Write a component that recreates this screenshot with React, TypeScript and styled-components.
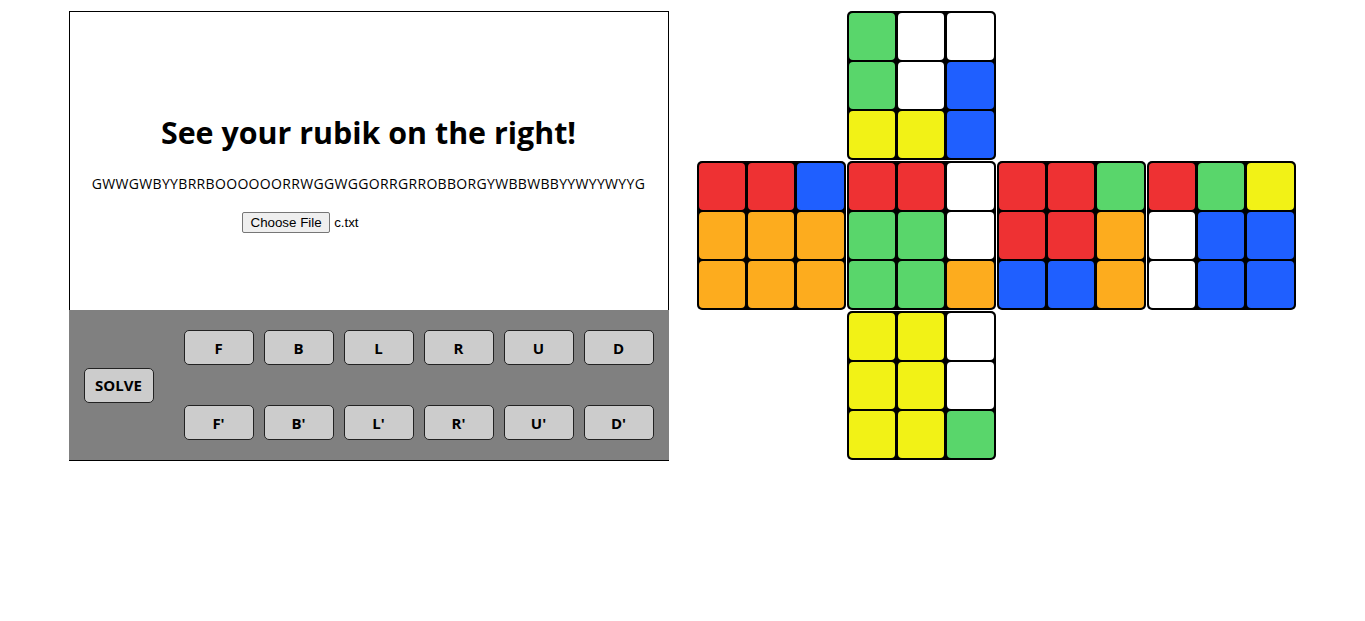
import React from "react";
import styled, { createGlobalStyle } from "styled-components";

const GlobalStyle = createGlobalStyle`
  html, body { margin: 0; padding: 0; background: #ffffff; }
  body { font-family: "Open Sans", "Noto Sans", sans-serif; color: #000; }
`;

const Page = styled.div`
  display: flex;
  justify-content: center;
  align-items: flex-start;
  gap: 28px;
  padding-top: 11px;
`;

const Panel = styled.div`
  width: 600px;
  display: flex;
  flex-direction: column;
`;

const Display = styled.div`
  height: 299px;
  box-sizing: border-box;
  border: 1px solid #000;
  border-bottom: none;
  display: flex;
  flex-direction: column;
  align-items: center;
  padding-top: 101px;
`;

const Title = styled.h1`
  margin: 0;
  font-size: 30.4px;
  line-height: 40px;
  font-weight: 700;
`;

const Code = styled.div`
  margin-top: 21px;
  font-size: 14px;
  line-height: 20px;
  letter-spacing: 0.33px;
`;

const FileRow = styled.div`
  margin-top: 18px;
  width: 253px;
  height: 21px;
  display: flex;
  align-items: center;
  gap: 4px;
  font-family: "Liberation Sans", Arial, sans-serif;
  font-size: 13.33px;
`;

const FileButton = styled.button`
  height: 21px;
  padding: 1px 7.5px;
  box-sizing: border-box;
  border: 1px solid #767676;
  border-radius: 2px;
  background: #efefef;
  color: #000;
  font-family: "Liberation Sans", Arial, sans-serif;
  font-size: 13.33px;
  cursor: default;
`;

const FileName = styled.span`
  color: #000;
`;

const Controls = styled.div`
  height: 150px;
  background: #808080;
  border-bottom: 1px solid #000;
  display: flex;
  align-items: center;
  padding: 0 15px;
  gap: 30px;
`;

const Btn = styled.button`
  width: 70px;
  height: 35px;
  box-sizing: border-box;
  background: #cccccc;
  border: 1px solid #222;
  border-radius: 5px;
  font-family: "Open Sans", "Noto Sans", sans-serif;
  font-weight: 700;
  font-size: 15px;
  color: #000;
  padding: 0;
  cursor: pointer;
`;

const MoveGrid = styled.div`
  display: grid;
  grid-template-columns: repeat(6, 70px);
  grid-auto-rows: 35px;
  column-gap: 10px;
  row-gap: 40px;
`;

const Net = styled.div`
  display: grid;
  grid-template-columns: repeat(4, 149px);
  grid-template-rows: repeat(3, 149px);
  gap: 1px;
  width: 600px;
`;

const Face = styled.div<{ $col: number; $row: number }>`
  grid-column: ${(p) => p.$col};
  grid-row: ${(p) => p.$row};
  background: #000;
  border-radius: 5px;
  padding: 2px;
  box-sizing: border-box;
  display: grid;
  grid-template-columns: repeat(3, 1fr);
  grid-template-rows: repeat(3, 1fr);
  gap: 2.5px;
`;

const COLORS: Record<string, string> = {
  G: "#59d66b",
  W: "#ffffff",
  B: "#1f5fff",
  Y: "#f2f216",
  R: "#ee3133",
  O: "#fdac1e",
};

const Sticker = styled.div<{ $c: string }>`
  background: ${(p) => COLORS[p.$c]};
  border-radius: 4px;
`;

const STATE = "GWWGWBYYBRRBOOOOOORRWGGWGGORRGRROBBORGYWBBWBBYYWYYWYYG";

const FACES: { col: number; row: number }[] = [
  { col: 2, row: 1 },
  { col: 1, row: 2 },
  { col: 2, row: 2 },
  { col: 3, row: 2 },
  { col: 4, row: 2 },
  { col: 2, row: 3 },
];

const MOVES = ["F", "B", "L", "R", "U", "D", "F'", "B'", "L'", "R'", "U'", "D'"];

export default function App() {
  return (
    <>
      <GlobalStyle />
      <Page>
        <Panel>
          <Display>
            <Title>See your rubik on the right!</Title>
            <Code>{STATE}</Code>
            <FileRow>
              <FileButton type="button">Choose File</FileButton>
              <FileName>c.txt</FileName>
            </FileRow>
          </Display>
          <Controls>
            <Btn type="button">SOLVE</Btn>
            <MoveGrid>
              {MOVES.map((m) => (
                <Btn key={m} type="button">
                  {m}
                </Btn>
              ))}
            </MoveGrid>
          </Controls>
        </Panel>
        <Net>
          {FACES.map((f, i) => (
            <Face key={i} $col={f.col} $row={f.row}>
              {STATE.slice(i * 9, i * 9 + 9)
                .split("")
                .map((c, j) => (
                  <Sticker key={j} $c={c} />
                ))}
            </Face>
          ))}
        </Net>
      </Page>
    </>
  );
}
